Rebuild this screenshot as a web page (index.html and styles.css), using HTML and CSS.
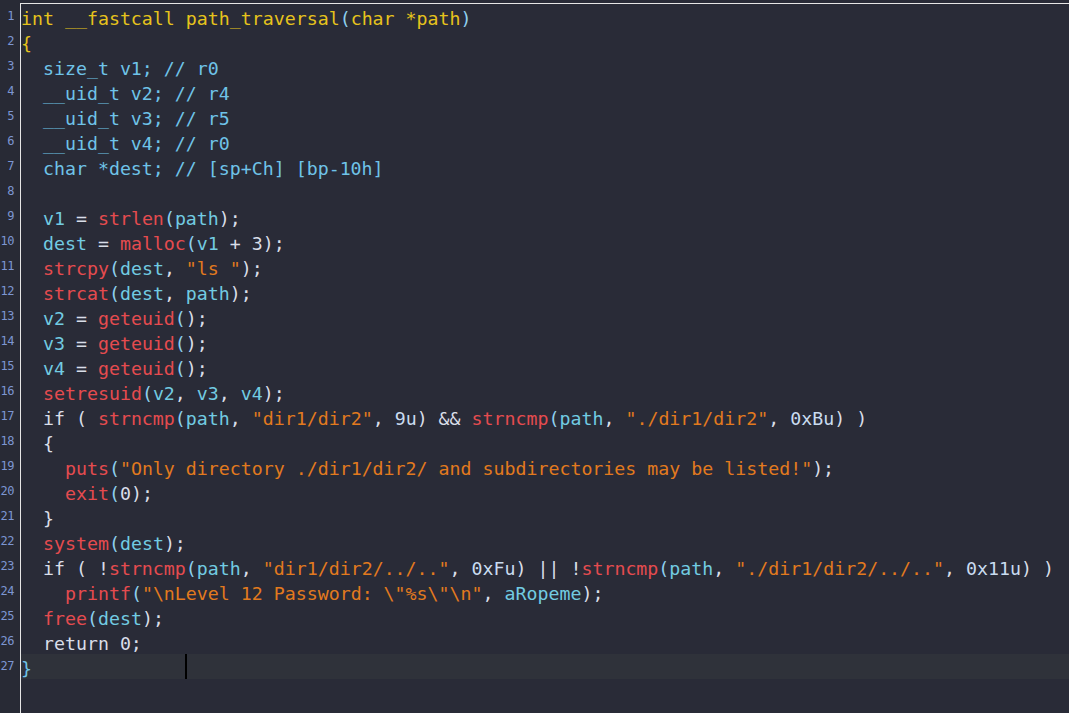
FILE: index.html
```html
<!DOCTYPE html>
<html>
<head>
<meta charset="utf-8">
<link rel="stylesheet" href="styles.css">
</head>
<body>
<div class="editor">
  <div class="gutter">
    <div class="ln">1</div><div class="ln">2</div><div class="ln">3</div><div class="ln">4</div><div class="ln">5</div><div class="ln">6</div><div class="ln">7</div><div class="ln">8</div><div class="ln">9</div><div class="ln">10</div><div class="ln">11</div><div class="ln">12</div><div class="ln">13</div><div class="ln">14</div><div class="ln">15</div><div class="ln">16</div><div class="ln">17</div><div class="ln">18</div><div class="ln">19</div><div class="ln">20</div><div class="ln">21</div><div class="ln">22</div><div class="ln">23</div><div class="ln">24</div><div class="ln">25</div><div class="ln">26</div><div class="ln">27</div>
  </div>
  <div class="code">
<div class="row"><span class="y">int __fastcall path_traversal</span><span class="p">(</span><span class="y">char *path</span><span class="p">)</span></div>
<div class="row"><span class="y">{</span></div>
<div class="row"><span class="d">  size_t v1; // r0</span></div>
<div class="row"><span class="d">  __uid_t v2; // r4</span></div>
<div class="row"><span class="d">  __uid_t v3; // r5</span></div>
<div class="row"><span class="d">  __uid_t v4; // r0</span></div>
<div class="row"><span class="d">  char *dest; // [sp+Ch] [bp-10h]</span></div>
<div class="row"> </div>
<div class="row">  <span class="v">v1</span> = <span class="f">strlen</span><span class="p">(</span><span class="v">path</span>);</div>
<div class="row">  <span class="v">dest</span> = <span class="f">malloc</span><span class="p">(</span><span class="v">v1</span> + 3);</div>
<div class="row">  <span class="f">strcpy</span><span class="p">(</span><span class="v">dest</span>, <span class="s">"ls "</span>);</div>
<div class="row">  <span class="f">strcat</span><span class="p">(</span><span class="v">dest</span>, <span class="v">path</span>);</div>
<div class="row">  <span class="v">v2</span> = <span class="f">geteuid</span><span class="p">(</span>);</div>
<div class="row">  <span class="v">v3</span> = <span class="f">geteuid</span><span class="p">(</span>);</div>
<div class="row">  <span class="v">v4</span> = <span class="f">geteuid</span><span class="p">(</span>);</div>
<div class="row">  <span class="f">setresuid</span><span class="p">(</span><span class="v">v2</span>, <span class="v">v3</span>, <span class="v">v4</span>);</div>
<div class="row">  if ( <span class="f">strncmp</span><span class="p">(</span><span class="v">path</span>, <span class="s">"dir1/dir2"</span>, <span class="n">9u</span>) &amp;&amp; <span class="f">strncmp</span><span class="p">(</span><span class="v">path</span>, <span class="s">"./dir1/dir2"</span>, <span class="n">0xBu</span>) )</div>
<div class="row">  {</div>
<div class="row">    <span class="f">puts</span><span class="p">(</span><span class="s">"Only directory ./dir1/dir2/ and subdirectories may be listed!"</span>);</div>
<div class="row">    <span class="f">exit</span><span class="p">(</span>0);</div>
<div class="row">  }</div>
<div class="row">  <span class="f">system</span><span class="p">(</span><span class="v">dest</span>);</div>
<div class="row">  if ( !<span class="f">strncmp</span><span class="p">(</span><span class="v">path</span>, <span class="s">"dir1/dir2/../.."</span>, <span class="n">0xFu</span>) || !<span class="f">strncmp</span><span class="p">(</span><span class="v">path</span>, <span class="s">"./dir1/dir2/../.."</span>, <span class="n">0x11u</span>) )</div>
<div class="row">    <span class="f">printf</span><span class="p">(</span><span class="s">"\nLevel 12 Password: \"%s\"\n"</span>, <span class="v">aRopeme</span>);</div>
<div class="row">  <span class="f">free</span><span class="p">(</span><span class="v">dest</span>);</div>
<div class="row">  return 0;</div>
<div class="row current"><span class="d">}</span><span class="cursor"></span></div>
  </div>
</div>
</body>
</html>
```

FILE: styles.css
```css
html, body {
  margin: 0;
  padding: 0;
  background: #292b37;
  overflow: hidden;
}

.editor {
  display: flex;
  height: 713px;
  width: 1069px;
}

.gutter {
  width: 20px;
  flex: none;
  padding-top: 4px;
  box-sizing: border-box;
  background: #282a35;
}

.ln {
  height: 25px;
  line-height: 25px;
  padding-right: 6px;
  text-align: right;
  font-family: "DejaVu Sans Mono", monospace;
  font-size: 12px;
  letter-spacing: -0.5px;
  color: #7d96d2;
}

.code {
  flex: 1;
  margin-top: 3px;
  border-top: 1px solid #e6e6e6;
  border-left: 1px solid #e6e6e6;
  font-family: "DejaVu Sans Mono", monospace;
  font-size: 18.25px;
  color: #d9dee8;
}

.row {
  position: relative;
  height: 25px;
  box-sizing: border-box;
  padding-top: 4px;
  padding-left: 0;
  line-height: 21px;
  white-space: pre;
}

.row.current {
  background: #2f323a;
}

.cursor {
  position: absolute;
  left: 164px;
  top: 0;
  width: 2px;
  height: 25px;
  background: #000;
}

.y { color: #e6c31c; }
.d { color: #6fc3e8; }
.v { color: #72cbe2; }
.f { color: #e54b4f; }
.s { color: #e27a1e; }
.n { color: #c9dcf0; }
.p { color: #8fd0ee; }
```
